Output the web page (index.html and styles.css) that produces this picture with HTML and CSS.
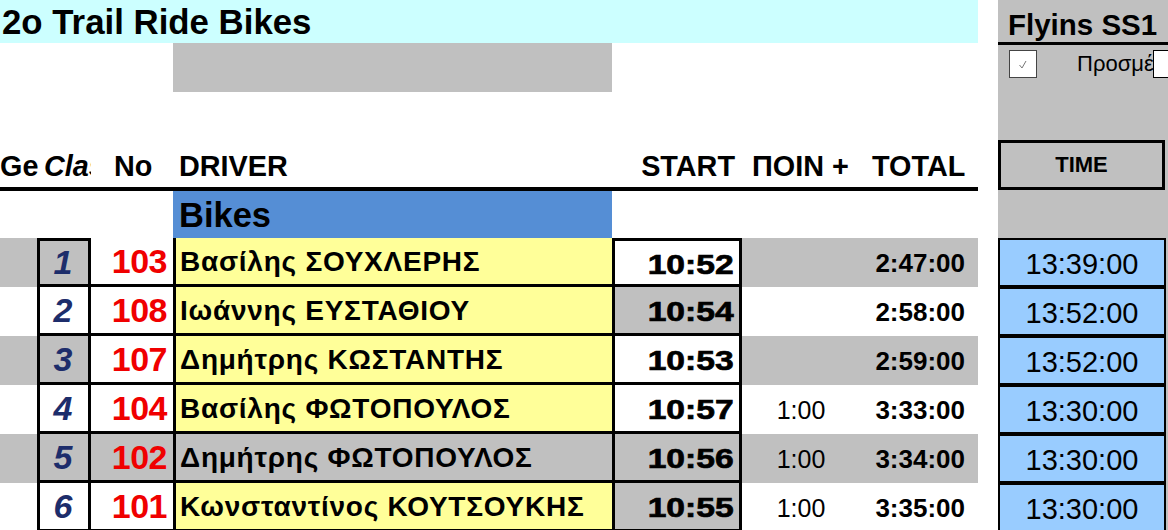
FILE: index.html
```html
<!DOCTYPE html>
<html lang="el">
<head>
<meta charset="utf-8">
<title>2o Trail Ride Bikes</title>
<link rel="stylesheet" href="styles.css">
</head>
<body>
<div class="sheet">
  <div class="main">
    <div class="title">2o Trail Ride Bikes</div>
    <div class="band"><div class="band-box"></div></div>
    <div class="spacer"></div>
    <div class="grid head">
      <div class="h-ge">Ge</div>
      <div class="h-cla"><span>Class</span></div>
      <div class="h-no">No</div>
      <div class="h-driver">DRIVER</div>
      <div class="h-start">START</div>
      <div class="h-rest"><span class="h-pen">ΠΟΙΝ +</span><span class="h-total">TOTAL</span></div>
    </div>
    <div class="rule"></div>
    <div class="grid cat">
      <div></div><div></div><div></div>
      <div class="cat-name">Bikes</div>
      <div></div><div></div>
    </div>
    <div class="rows">
      <div class="grid row first">
        <div class="c-left gray"></div>
        <div class="c-rank gray">1</div>
        <div class="c-no">103</div>
        <div class="c-name yellow">Βασίλης ΣΟΥΧΛΕΡΗΣ</div>
        <div class="c-start"><span>10:52</span></div>
        <div class="c-rest gray"><span class="pen"></span><span class="total">2:47:00</span></div>
      </div>
      <div class="grid row">
        <div class="c-left"></div>
        <div class="c-rank">2</div>
        <div class="c-no">108</div>
        <div class="c-name yellow">Ιωάννης ΕΥΣΤΑΘΙΟΥ</div>
        <div class="c-start gray"><span>10:54</span></div>
        <div class="c-rest"><span class="pen"></span><span class="total">2:58:00</span></div>
      </div>
      <div class="grid row">
        <div class="c-left gray"></div>
        <div class="c-rank gray">3</div>
        <div class="c-no">107</div>
        <div class="c-name yellow">Δημήτρης ΚΩΣΤΑΝΤΗΣ</div>
        <div class="c-start"><span>10:53</span></div>
        <div class="c-rest gray"><span class="pen"></span><span class="total">2:59:00</span></div>
      </div>
      <div class="grid row">
        <div class="c-left"></div>
        <div class="c-rank">4</div>
        <div class="c-no">104</div>
        <div class="c-name yellow">Βασίλης ΦΩΤΟΠΟΥΛΟΣ</div>
        <div class="c-start"><span>10:57</span></div>
        <div class="c-rest"><span class="pen">1:00</span><span class="total">3:33:00</span></div>
      </div>
      <div class="grid row">
        <div class="c-left gray"></div>
        <div class="c-rank gray">5</div>
        <div class="c-no gray">102</div>
        <div class="c-name gray">Δημήτρης ΦΩΤΟΠΟΥΛΟΣ</div>
        <div class="c-start gray"><span>10:56</span></div>
        <div class="c-rest gray"><span class="pen">1:00</span><span class="total">3:34:00</span></div>
      </div>
      <div class="grid row">
        <div class="c-left"></div>
        <div class="c-rank">6</div>
        <div class="c-no">101</div>
        <div class="c-name yellow">Κωνσταντίνος ΚΟΥΤΣΟΥΚΗΣ</div>
        <div class="c-start gray"><span>10:55</span></div>
        <div class="c-rest"><span class="pen">1:00</span><span class="total">3:35:00</span></div>
      </div>
    </div>
  </div>
  <div class="gap"></div>
  <div class="side">
    <div class="side-title">Flyins SS1</div>
    <div class="side-check">
      <div class="checkbox"><svg width="26" height="26" viewBox="0 0 26 26"><path d="M9.5 14 L12 17 L16 10" fill="none" stroke="#777" stroke-width="1"/></svg></div>
      <div class="check-label">Προσμέτρηση</div>
      <div class="check-box2"></div>
    </div>
    <div class="side-time">TIME</div>
    <div class="side-gap"></div>
    <div class="tcell">13:39:00</div>
    <div class="tcell">13:52:00</div>
    <div class="tcell">13:52:00</div>
    <div class="tcell">13:30:00</div>
    <div class="tcell">13:30:00</div>
    <div class="tcell">13:30:00</div>
  </div>
</div>
</body>
</html>
```
FILE: styles.css
```css
* { box-sizing: border-box; }
html, body { margin: 0; padding: 0; }
body {
  font-family: "Liberation Sans", Arial, sans-serif;
  background: #fff;
  color: #000;
  width: 1168px;
  height: 530px;
  overflow: hidden;
}
.sheet { display: flex; height: 530px; }
.main { width: 978px; flex: none; }
.gap { width: 20px; flex: none; }
.side { width: 170px; flex: none; background: #c0c0c0; height: 530px; }

.title {
  height: 43px;
  background: #ccffff;
  font-weight: bold;
  font-size: 34.8px;
  line-height: 43px;
  padding-left: 2px;
  white-space: nowrap;
}
.band { height: 49px; padding-left: 173px; }
.band-box { width: 439px; height: 49px; background: #c0c0c0; }
.spacer { height: 48px; }

.grid {
  display: grid;
  grid-template-columns: 37px 54px 82px 439px 130px 236px;
}
.head {
  height: 47px;
  font-weight: bold;
  font-size: 28.8px;
  line-height: 1;
  padding-top: 12px;
  white-space: nowrap;
}
.h-cla { font-style: italic; padding-left: 7px; overflow: hidden; }
.h-cla span { display: block; width: 47px; overflow: hidden; }
.h-no { padding-left: 23px; }
.h-driver { padding-left: 6px; }
.h-start { text-align: right; padding-right: 7px; }
.h-rest { display: flex; }
.h-pen { width: 130px; padding-left: 10px; }

.rule { height: 4px; background: #000; }

.cat { height: 47px; }
.cat-name {
  background: #558ed5;
  font-weight: bold;
  font-size: 34.5px;
  line-height: 1;
  padding: 7px 0 0 6px;
}

.row { height: 49px; }
.row > div { display: flex; align-items: center; white-space: nowrap; overflow: hidden; }
.gray { background: #c0c0c0; }
.yellow { background: #ffff99; }

.c-rank {
  border-left: 3px solid #000;
  border-right: 3px solid #000;
  border-bottom: 3px solid #000;
  justify-content: center;
  font-weight: bold;
  font-style: italic;
  font-size: 34px;
  color: #1d2d6b;
  padding-right: 2px;
}
.c-no {
  border-bottom: 3px solid #000;
  justify-content: flex-end;
  padding-right: 6px;
  font-weight: bold;
  font-size: 34px;
  color: #f00000;
  letter-spacing: -0.5px;
}
.c-name {
  border-left: 3px solid #000;
  border-bottom: 3px solid #000;
  padding-left: 4px;
  padding-top: 2px;
  font-weight: bold;
  font-size: 28px;
  letter-spacing: 0.75px;
}
.c-start {
  border-left: 3px solid #000;
  border-right: 3px solid #000;
  border-bottom: 3px solid #000;
  justify-content: flex-end;
  padding-right: 5px;
  padding-top: 4px;
  font-weight: bold;
  font-size: 28px;
}
.c-start span {
  display: inline-block;
  transform: scaleX(1.2);
  transform-origin: right center;
  -webkit-text-stroke: 0.7px #000;
}
.first .c-rank, .first .c-start { border-top: 3px solid #000; }
.c-rest { padding-top: 2px; }
.pen { width: 118px; text-align: center; font-size: 25px; }
.total { flex: 1; text-align: right; padding-right: 13px; font-weight: bold; font-size: 26px; }

.side-title {
  height: 45px;
  border-bottom: 3px solid #000;
  font-weight: bold;
  font-size: 29.5px;
  line-height: 1;
  padding: 10px 0 0 10px;
  white-space: nowrap;
}
.side-check {
  margin-top: 5px;
  height: 28px;
  display: flex;
  align-items: center;
}
.checkbox {
  margin-left: 11px;
  width: 28px;
  height: 28px;
  background: #fff;
  border: 1px solid #444;
  flex: none;
}
.checkbox svg { display: block; }
.check-label {
  margin-left: 40px;
  width: 76px;
  font-size: 22px;
  white-space: nowrap;
  overflow: hidden;
  flex: none;
}
.check-box2 {
  width: 20px;
  height: 28px;
  background: #fff;
  border: 1px solid #000;
  flex: none;
}
.side-time {
  margin-top: 62px;
  height: 50px;
  width: 167px;
  border: 3px solid #000;
  display: flex;
  align-items: center;
  justify-content: center;
  font-weight: bold;
  font-size: 22px;
}
.side-gap { height: 48px; }
.tcell {
  width: 168px;
  height: 49px;
  border: 2px solid #000;
  background: #99ccff;
  display: flex;
  align-items: center;
  justify-content: center;
  padding-top: 3px;
  font-size: 29px;
}
```
